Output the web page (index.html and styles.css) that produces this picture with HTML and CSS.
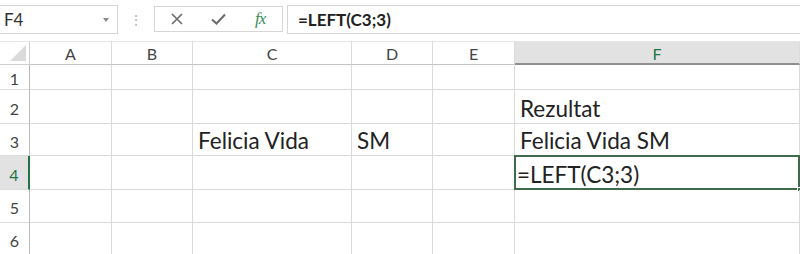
FILE: index.html
```html
<!DOCTYPE html>
<html lang="ro">
<head>
    <meta charset="UTF-8">
    <title>LEFT</title>
    <link rel="stylesheet" href="styles.css">
</head>
<body>
    <div class="toolbar">
        <div class="namebox">
            <span>F4</span>
            <svg class="dropdown" width="6" height="4" viewBox="0 0 6 4"><path d="M0 0h6L3 4z" fill="#8a8a8a"/></svg>
        </div>
        <div class="grip">⋮</div>
        <div class="buttons">
            <svg class="btn" width="12" height="12" viewBox="0 0 12 12"><path d="M1 1L11 11M11 1L1 11" stroke="#6b6b6b" stroke-width="1.6" fill="none"/></svg>
            <svg class="btn" width="15" height="12" viewBox="0 0 15 12"><path d="M1 6.5L5.5 10.5L14 1.5" stroke="#6b6b6b" stroke-width="2" fill="none"/></svg>
            <span class="fx">fx</span>
        </div>
        <div class="formula">=LEFT(C3;3)</div>
    </div>

    <div class="sheet">
        <div class="corner"><svg width="16" height="16" viewBox="0 0 16 16"><path d="M16 0V16H0z" fill="#dadada"/></svg></div>
        <div class="colhead">A</div>
        <div class="colhead">B</div>
        <div class="colhead">C</div>
        <div class="colhead">D</div>
        <div class="colhead">E</div>
        <div class="colhead active">F</div>

        <div class="rowhead r1">1</div>
        <div class="cell"></div><div class="cell"></div><div class="cell"></div><div class="cell"></div><div class="cell"></div><div class="cell"></div>

        <div class="rowhead">2</div>
        <div class="cell"></div><div class="cell"></div><div class="cell"></div><div class="cell"></div><div class="cell"></div>
        <div class="cell">Rezultat</div>

        <div class="rowhead">3</div>
        <div class="cell"></div><div class="cell"></div>
        <div class="cell">Felicia Vida</div>
        <div class="cell">SM</div>
        <div class="cell"></div>
        <div class="cell">Felicia Vida SM</div>

        <div class="rowhead active">4</div>
        <div class="cell"></div><div class="cell"></div><div class="cell"></div><div class="cell"></div><div class="cell"></div>
        <div class="cell selected">=LEFT(C3;3)<em class="handle"></em></div>

        <div class="rowhead">5</div>
        <div class="cell"></div><div class="cell"></div><div class="cell"></div><div class="cell"></div><div class="cell"></div><div class="cell"></div>

        <div class="rowhead">6</div>
        <div class="cell"></div><div class="cell"></div><div class="cell"></div><div class="cell"></div><div class="cell"></div><div class="cell"></div>
    </div>
</body>
</html>
```

FILE: styles.css
```css
* {
    box-sizing: border-box;
}

body {
    margin: 0;
    width: 800px;
    height: 254px;
    overflow: hidden;
    background: #fff;
    font-family: Lato, "Open Sans", sans-serif;
    color: #222;
}

/* 公式栏 */
.toolbar {
    display: flex;
    align-items: flex-start;
    height: 42px;
    padding-top: 5px;
    border-bottom: 1px solid #e6e6e6;
}

.namebox {
    display: flex;
    align-items: center;
    justify-content: space-between;
    width: 118px;
    height: 29px;
    padding: 0 8px 0 4px;
    border: 1px solid #d6d6d6;
    border-left: none;
    font-size: 17px;
    color: #333;
}

.grip {
    width: 36px;
    height: 29px;
    line-height: 29px;
    text-align: center;
    color: #b5b5b5;
    font-size: 14px;
}

.buttons {
    display: flex;
    align-items: center;
    width: 129px;
    height: 26px;
    margin-top: 1px;
    border: 1px solid #d6d6d6;
}

.buttons .btn:first-child {
    margin-left: 16px;
}

.buttons .btn + .btn {
    margin-left: 28px;
}

.buttons .fx {
    margin-left: 29px;
    font-family: "Liberation Serif", serif;
    font-style: italic;
    font-size: 17px;
    color: #3b8a5a;
    letter-spacing: -1px;
}

.formula {
    flex: 1;
    height: 29px;
    margin-left: 4px;
    padding-left: 10px;
    line-height: 27px;
    border: 1px solid #d6d6d6;
    border-right: none;
    font-size: 17px;
    font-weight: 700;
    color: #222;
}

/* 表格 */
.sheet {
    display: grid;
    grid-template-columns: 30px 82px 81px 159px 81px 82px 285px;
    grid-template-rows: 23px 25px 34px 32px 34px 33px 33px;
}

.corner {
    display: flex;
    align-items: flex-end;
    justify-content: flex-end;
    padding: 0 3px 3px 0;
    border-right: 1px solid #cfcfcf;
    border-bottom: 1px solid #cfcfcf;
}

.colhead {
    text-align: center;
    line-height: 24px;
    font-size: 16px;
    color: #444;
    border-right: 1px solid #dcdcdc;
    border-bottom: 1px solid #c4c4c4;
}

.colhead.active {
    background: #e2e2e2;
    color: #217346;
    border-bottom: 2px solid #8f8f8f;
}

.rowhead {
    display: flex;
    align-items: center;
    justify-content: center;
    font-size: 16px;
    color: #444;
    border-right: 1px solid #b8b8b8;
    border-bottom: 1px solid #dcdcdc;
    padding-top: 3px;
}

.rowhead.active {
    background: #e2e2e2;
    color: #217346;
    border-right: 2px solid #217346;
}

.cell {
    position: relative;
    display: flex;
    align-items: flex-end;
    padding: 0 0 1px 5px;
    font-size: 22.5px;
    white-space: nowrap;
    color: #222;
    border-right: 1px solid #dadada;
    border-bottom: 1px solid #dadada;
}

.cell.selected {
    padding-left: 1px;
    padding-bottom: 0;
    border: 2px solid #3f6b4c;
    margin: -1px 0 0 -1px;
}

.handle {
    position: absolute;
    right: -4px;
    bottom: -4px;
    width: 5px;
    height: 5px;
    background: #3f6b4c;
    border: 1px solid #fff;
}
```
